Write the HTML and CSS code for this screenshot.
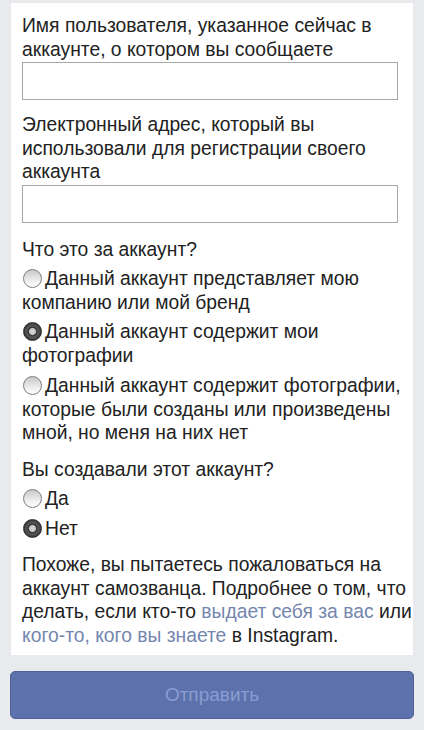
FILE: index.html
```html
<!DOCTYPE html>
<html lang="ru">
<head>
<meta charset="utf-8">
<title>Жалоба</title>
<link rel="stylesheet" href="styles.css">
</head>
<body>
<div class="page">
  <form class="card">
    <div class="field">
      <label class="label">Имя пользователя, указанное сейчас в<br>аккаунте, о котором вы сообщаете</label>
      <input class="input" type="text">
    </div>
    <div class="field">
      <label class="label">Электронный адрес, который вы<br>использовали для регистрации своего<br>аккаунта</label>
      <input class="input" type="text">
    </div>
    <div class="group group-first">
      <p class="question">Что это за аккаунт?</p>
      <div class="options">
        <p class="option"><span class="radio"></span>Данный аккаунт представляет мою<br>компанию или мой бренд</p>
        <p class="option"><span class="radio checked"></span>Данный аккаунт содержит мои<br>фотографии</p>
        <p class="option option-last"><span class="radio"></span>Данный аккаунт содержит фотографии,<br>которые были созданы или произведены<br>мной, но меня на них нет</p>
      </div>
    </div>
    <div class="group">
      <p class="question">Вы создавали этот аккаунт?</p>
      <div class="options">
        <p class="option"><span class="radio"></span>Да</p>
        <p class="option"><span class="radio checked"></span>Нет</p>
      </div>
    </div>
    <p class="note">Похоже, вы пытаетесь пожаловаться на<br>аккаунт самозванца. Подробнее о том, что<br>делать, если кто-то <a class="link" href="#">выдает себя за вас</a> или<br><a class="link" href="#">кого-то, кого вы знаете</a> в Instagram.</p>
  </form>
  <button class="submit" type="button">Отправить</button>
</div>
</body>
</html>
```

FILE: styles.css
```css
html, body {
  margin: 0;
  padding: 0;
  background: #e9eaed;
}
body {
  font-family: "Liberation Sans", Arial, Helvetica, sans-serif;
  font-size: 19.3px;
  line-height: 23.5px;
  color: #222;
}
.page {
  padding: 3px 10px 0 10px;
  display: flex;
  flex-direction: column;
}
.card {
  margin: 0 1px;
  background: #fff;
  padding: 11px 4px 8px 11px;
  display: flex;
  flex-direction: column;
  gap: 13px;
  white-space: nowrap;
}
.field {
  display: flex;
  flex-direction: column;
  gap: 1px;
}
.label {
  display: block;
}
.input {
  box-sizing: border-box;
  width: 376px;
  height: 38px;
  margin: 0;
  border: 1px solid #a7a7a7;
  background: #fff;
  border-radius: 0;
  font: inherit;
}
.group {
  display: flex;
  flex-direction: column;
  gap: 6px;
}
.group-first {
  margin-top: 2px;
}
.question {
  margin: 0;
}
.options {
  display: flex;
  flex-direction: column;
  gap: 6px;
}
.option {
  margin: 0;
}
.option-last {
  margin-top: 1px;
}
.radio {
  display: inline-block;
  box-sizing: border-box;
  width: 19px;
  height: 19px;
  margin: 0 3px 0 1px;
  vertical-align: -3px;
  border-radius: 50%;
  border: 1px solid #7d7d7d;
  background: linear-gradient(#c9c9c9, #f2f2f2 70%, #ffffff);
}
.radio.checked {
  border-color: #2e2e2e;
  background: radial-gradient(circle at 50% 50%, #d6d6d6 0, #c4c4c4 3px, #2a2a2a 4.2px, #5a5a5a 5.5px, #4a4a4a 7px, #2f2f2f 9px);
}
.note {
  margin: 0;
}
.link {
  color: #7486ae;
  text-decoration: none;
}
.submit {
  margin-top: 16px;
  height: 48px;
  border: 1px solid #51639a;
  border-radius: 5px;
  background: #5d71ac;
  color: #8a9dd2;
  font-family: "Liberation Sans", Arial, Helvetica, sans-serif;
  font-size: 19px;
}
```
